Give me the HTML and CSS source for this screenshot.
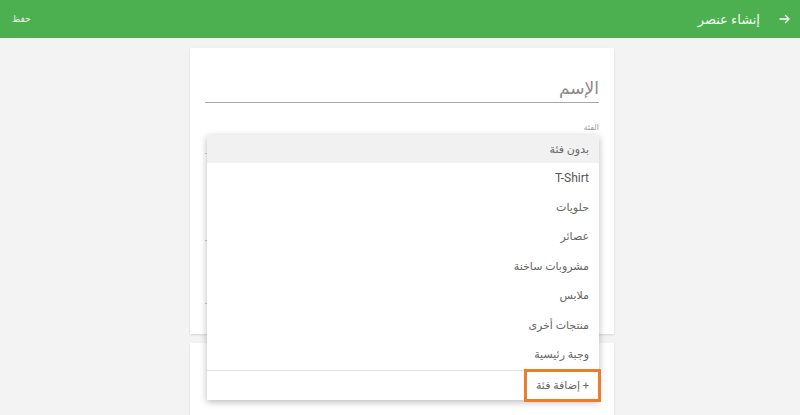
FILE: index.html
```html
<!DOCTYPE html>
<html lang="ar" dir="rtl">
<head>
<meta charset="utf-8">
<title>إنشاء عنصر</title>
<link rel="stylesheet" href="styles.css">
</head>
<body>
<header class="topbar">
  <span class="back">
    <svg width="12" height="12" viewBox="0 0 12 12"><path d="M1 6h9M6.5 2.5L10 6l-3.5 3.5" fill="none" stroke="#fff" stroke-width="1.3" stroke-linecap="round" stroke-linejoin="round"/></svg>
  </span>
  <span class="title">إنشاء عنصر</span>
  <span class="spacer"></span>
  <span class="save">حفظ</span>
</header>
<main class="page">
  <section class="card first">
    <div class="name-field"><span class="placeholder">الإسم</span></div>
    <div class="label">الفئة</div>
    <div class="select-line s1"></div>
    <div class="select-line s2"></div>
    <div class="select-line s3"></div>

    <div class="menu">
      <div class="item active">بدون فئة</div>
      <div class="item latin">T-Shirt</div>
      <div class="item">حلويات</div>
      <div class="item">عصائر</div>
      <div class="item">مشروبات ساخنة</div>
      <div class="item">ملابس</div>
      <div class="item">منتجات أخرى</div>
      <div class="item">وجبة رئيسية</div>
      <div class="item add">+ إضافة فئة</div>
      <div class="highlight"></div>
    </div>
  </section>
  <section class="card second"></section>
</main>
</body>
</html>
```
FILE: styles.css
```css
html, body {
  margin: 0;
  padding: 0;
}
body {
  background: #f3f3f3;
  font-family: Roboto, "DejaVu Sans", sans-serif;
  width: 800px;
  height: 415px;
  overflow: hidden;
}
.topbar {
  height: 38px;
  background: #4caf50;
  display: flex;
  align-items: center;
  color: #fff;
  padding: 0 9px 0 12px;
  box-sizing: border-box;
}
.back {
  display: flex;
  align-items: center;
  width: 12px;
  height: 12px;
}
.title {
  font-size: 13px;
  margin-right: 19px;
  color: #f4fbf4;
}
.spacer { flex: 1; }
.save {
  font-size: 9px;
  color: #eef8ee;
}
.page {
  display: flex;
  flex-direction: column;
  align-items: center;
  padding-top: 10px;
  padding-left: 4px;
  gap: 9px;
}
.card {
  width: 424px;
  background: #fff;
  box-shadow: 0 1px 2px rgba(0,0,0,0.12);
  box-sizing: border-box;
  padding: 0 15px;
}
.card.first {
  height: 286px;
  position: relative;
  padding-top: 25px;
}
.card.second {
  height: 80px;
}
.name-field {
  height: 29px;
  border-bottom: 1px solid #a8a8a8;
  display: flex;
  align-items: center;
}
.placeholder {
  font-size: 17px;
  color: #8a8a8a;
}
.label {
  margin-top: 20px;
  font-size: 8px;
  line-height: 10px;
  color: #9a9a9a;
}
.select-line {
  border-bottom: 1px solid #cfcfcf;
}
.s1 { height: 20px; }
.s2 { height: 86px; }
.s3 { height: 62px; }
.menu {
  position: absolute;
  top: 87px;
  right: 15px;
  width: 392px;
  background: #fff;
  box-shadow: 0 2px 7px rgba(0,0,0,0.28);
  display: flex;
  flex-direction: column;
}
.item {
  height: 29.5px;
  display: flex;
  align-items: center;
  padding-right: 10px;
  font-size: 11px;
  color: #666;
}
.item.latin {
  font-size: 12px;
  color: #555;
}
.item.active {
  background: #f1f1f1;
  height: 28px;
}
.item.add {
  border-top: 1px solid #e2e2e2;
  height: 29px;
  direction: rtl;
}
.highlight {
  position: absolute;
  right: -2px;
  top: 234px;
  width: 77px;
  height: 33px;
  box-sizing: border-box;
  border: 3px solid #ee7c2c;
}
```
